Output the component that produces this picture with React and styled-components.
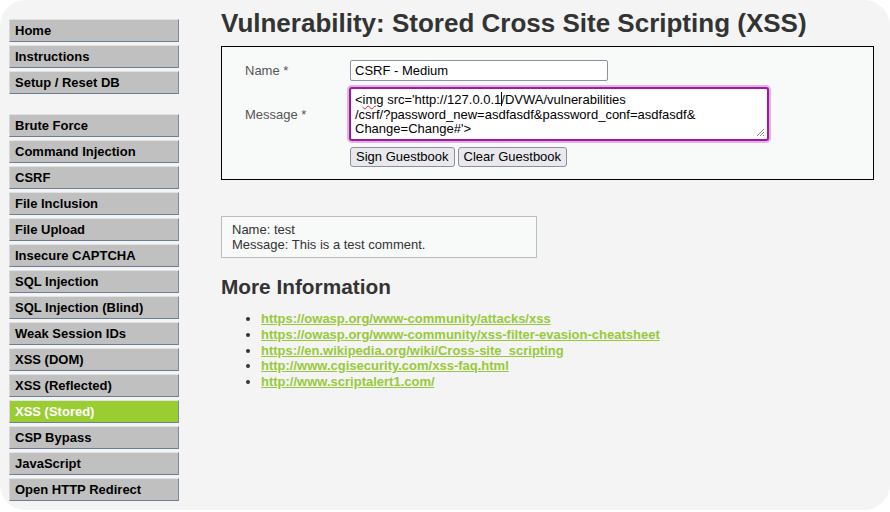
import React from "react";
import styled, { createGlobalStyle } from "styled-components";

const Global = createGlobalStyle`
  html, body { margin: 0; padding: 0; background: #ffffff; }
  body { font-family: "Liberation Sans", Arial, sans-serif; font-size: 13px; color: #333; }
  * { box-sizing: border-box; }
`;

const Page = styled.div`
  width: 890px;
  height: 510px;
  background: #f4f4f4;
  border-radius: 26px;
  display: flex;
  overflow: hidden;
`;

const Sidebar = styled.nav`
  width: 221px;
  flex: none;
  padding: 19px 0 0 9px;
`;

const MenuGroup = styled.ul`
  list-style: none;
  margin: 0 0 20px 0;
  padding: 0;
  width: 170px;
`;

const MenuItem = styled.li`
  margin: 0 0 3px 0;
`;

const MenuLink = styled.a`
  display: block;
  height: 23px;
  padding: 3px 5px;
  font-weight: bold;
  font-size: 13px;
  line-height: 15px;
  text-decoration: none;
  color: ${(p) => (p.$active ? "#ffffff" : "#000000")};
  background: ${(p) => (p.$active ? "#9acd32" : "#c0c0c0")};
  border-top: 1px solid #e2e2e2;
  border-left: 1px solid #d8d8d8;
  border-right: 1px solid #7c8ba3;
  border-bottom: 1px solid #6e7d96;
`;

const Main = styled.main`
  flex: 1;
  padding-top: 8px;
  padding-right: 16px;
`;

const Title = styled.h1`
  margin: 0 0 8px 0;
  font-size: 26px;
  line-height: 30px;
  font-weight: bold;
  color: #333;
`;

const FormBox = styled.div`
  border: 1px solid #000;
  background: #f8f9f9;
  padding: 13px 0 12px 23px;
  height: 134px;
`;

const FormGrid = styled.div`
  display: grid;
  grid-template-columns: 105px auto;
  grid-template-rows: 21px 54px 20px;
  row-gap: 6px;
  align-items: center;
`;

const Label = styled.div`
  color: #555;
  font-size: 13px;
  line-height: 15px;
`;

const TextInput = styled.div`
  width: 258px;
  height: 21px;
  border: 1px solid #8f8f9d;
  border-radius: 2px;
  background: #fff;
  padding: 0 4px;
  font-size: 13px;
  line-height: 19px;
  color: #000;
`;

const TextAreaBox = styled.div`
  position: relative;
  width: 420px;
  height: 54px;
  margin-left: -1px;
  border: 2px solid #a316a3;
  border-radius: 3px;
  box-shadow: 0 0 0 2px #e0b4e0;
  background: #fff;
  padding: 3px 3px 0 4px;
  font-size: 13px;
  line-height: 14.5px;
  color: #000;
  white-space: pre;
`;

const Squiggle = styled.span`
  text-decoration: underline wavy #e02020;
  text-decoration-thickness: 1px;
  text-underline-offset: 1px;
`;

const Caret = styled.span`
  display: inline-block;
  width: 1px;
  height: 14px;
  background: #000;
  vertical-align: -2px;
  margin: 0 -1px 0 0;
`;

const Grip = styled.svg`
  position: absolute;
  right: 2px;
  bottom: 2px;
`;

const ButtonRow = styled.div`
  display: flex;
  gap: 3px;
`;

const Button = styled.button`
  height: 20px;
  padding: 0 5px;
  border: 1px solid #8f8f9d;
  border-radius: 3px;
  background: #e9e9ed;
  font-family: "Liberation Sans", Arial, sans-serif;
  font-size: 13px;
  line-height: 18px;
  color: #000;
`;

const Entry = styled.div`
  margin-top: 36px;
  width: 316px;
  border: 1px solid #bdbdbd;
  background: #f8f9f9;
  padding: 5px 10px 5px 10px;
  font-size: 13px;
  line-height: 15px;
  color: #333;
`;

const SubTitle = styled.h2`
  margin: 17px 0 12px 0;
  font-size: 20.8px;
  line-height: 24px;
  font-weight: bold;
  color: #333;
`;

const LinkList = styled.ul`
  margin: 0;
  padding-left: 40px;
  list-style: disc;
  color: #333;
`;

const LinkItem = styled.li`
  font-size: 13px;
  line-height: 15.75px;
`;

const Link = styled.a`
  color: #98c93a;
  font-weight: bold;
  text-decoration: underline;
`;

const group1 = ["Home", "Instructions", "Setup / Reset DB"];
const group2 = [
  "Brute Force",
  "Command Injection",
  "CSRF",
  "File Inclusion",
  "File Upload",
  "Insecure CAPTCHA",
  "SQL Injection",
  "SQL Injection (Blind)",
  "Weak Session IDs",
  "XSS (DOM)",
  "XSS (Reflected)",
  "XSS (Stored)",
  "CSP Bypass",
  "JavaScript",
  "Open HTTP Redirect",
];

const links = [
  "https://owasp.org/www-community/attacks/xss",
  "https://owasp.org/www-community/xss-filter-evasion-cheatsheet",
  "https://en.wikipedia.org/wiki/Cross-site_scripting",
  "http://www.cgisecurity.com/xss-faq.html",
  "http://www.scriptalert1.com/",
];

export default function App() {
  return (
    <>
      <Global />
      <Page>
        <Sidebar>
          <MenuGroup>
            {group1.map((t) => (
              <MenuItem key={t}>
                <MenuLink href="#">{t}</MenuLink>
              </MenuItem>
            ))}
          </MenuGroup>
          <MenuGroup>
            {group2.map((t) => (
              <MenuItem key={t}>
                <MenuLink href="#" $active={t === "XSS (Stored)"}>
                  {t}
                </MenuLink>
              </MenuItem>
            ))}
          </MenuGroup>
        </Sidebar>
        <Main>
          <Title>Vulnerability: Stored Cross Site Scripting (XSS)</Title>
          <FormBox>
            <FormGrid>
              <Label>Name *</Label>
              <TextInput>CSRF - Medium</TextInput>
              <Label>Message *</Label>
              <TextAreaBox role="textbox">
                {"<"}
                <Squiggle>img</Squiggle>
                {" src='http://127.0.0.1"}
                <Caret />
                {"/DVWA/vulnerabilities\n/csrf/?password_new=asdfasdf&password_conf=asdfasdf&\nChange=Change#'>"}
                <Grip width="9" height="9" viewBox="0 0 9 9">
                  <path d="M8 1L1 8M8 4L4 8M8 7L7 8" stroke="#888" strokeWidth="1" />
                </Grip>
              </TextAreaBox>
              <div />
              <ButtonRow>
                <Button>Sign Guestbook</Button>
                <Button>Clear Guestbook</Button>
              </ButtonRow>
            </FormGrid>
          </FormBox>
          <Entry>
            Name: test
            <br />
            Message: This is a test comment.
          </Entry>
          <SubTitle>More Information</SubTitle>
          <LinkList>
            {links.map((l) => (
              <LinkItem key={l}>
                <Link href="#">{l}</Link>
              </LinkItem>
            ))}
          </LinkList>
        </Main>
      </Page>
    </>
  );
}
